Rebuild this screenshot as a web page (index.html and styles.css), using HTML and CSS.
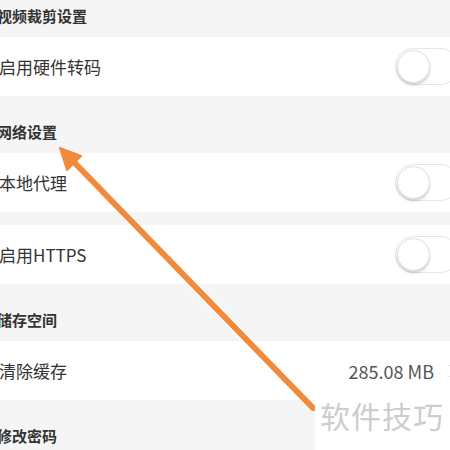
FILE: index.html
```html
<!DOCTYPE html>
<html>
<head>
  <title>设置</title>
  <link rel="stylesheet" href="styles.css">
</head>
<body>
  <div class="settings">
    <div class="group-title">视频裁剪设置</div>
    <div class="row">
      <span class="label">启用硬件转码</span>
      <div class="switch"><div class="knob"></div></div>
    </div>

    <div class="group-title">网络设置</div>
    <div class="row">
      <span class="label">本地代理</span>
      <div class="switch"><div class="knob"></div></div>
    </div>
    <div class="row">
      <span class="label">启用HTTPS</span>
      <div class="switch"><div class="knob"></div></div>
    </div>

    <div class="group-title">储存空间</div>
    <div class="row">
      <span class="label">清除缓存</span>
      <div class="value">
        <span>285.08 MB</span>
        <svg class="chevron" width="12" height="16" viewBox="0 0 12 16">
          <path d="M3 2 L9 8 L3 14" fill="none" stroke="#999" stroke-width="1.6"/>
        </svg>
      </div>
    </div>

    <div class="group-title">修改密码</div>
  </div>

  <!-- 标注箭头 -->
  <svg class="arrow" width="450" height="450" viewBox="0 0 450 450">
    <line x1="313" y1="408" x2="70" y2="158" stroke="#fff" stroke-opacity="0.6" stroke-width="9" stroke-linecap="round"/>
    <line x1="313" y1="408" x2="70" y2="158" stroke="#f28a3b" stroke-width="6" stroke-linecap="round"/>
    <polygon points="60,148 81,156 67,170" fill="#f28a3b" stroke="#f28a3b" stroke-width="2" stroke-linejoin="round"/>
  </svg>

  <div class="watermark">软件技巧</div>
</body>
</html>
```

FILE: styles.css
```css
body {
  margin: 0;
  background-color: #f5f5f5;
  font-family: "Noto Sans CJK SC", "Noto Sans", sans-serif;
  overflow: hidden;
  width: 450px;
  height: 450px;
  position: relative;
}

.settings {
  width: 490px;
  margin-top: -20px;
  margin-left: -3px;
  display: flex;
  flex-direction: column;
}

.group-title {
  height: 57px;
  box-sizing: border-box;
  padding-top: 26px;
  line-height: 20px;
  font-size: 15px;
  font-weight: bold;
  color: #333;
}

.row {
  height: 59px;
  background-color: #fff;
  display: flex;
  align-items: center;
  justify-content: space-between;
  padding-right: 28px;
}

.row + .row {
  margin-top: 13px;
}

.label {
  font-size: 17px;
  color: #333;
  padding-left: 2px;
}

.switch {
  width: 64px;
  height: 37px;
  box-sizing: border-box;
  border: 1px solid #e6e6e6;
  border-radius: 19px;
  background-color: #fff;
  display: flex;
  align-items: center;
  padding-left: 1px;
}

.knob {
  width: 33px;
  height: 33px;
  border-radius: 50%;
  background-color: #fff;
  border: 1px solid #e0e0e0;
  box-sizing: border-box;
  box-shadow: 0 2px 3px rgba(0, 0, 0, 0.18);
}

.value {
  display: flex;
  align-items: center;
  gap: 13px;
  font-size: 18px;
  color: #555;
}

.chevron {
  display: block;
}

.arrow {
  position: absolute;
  left: 0;
  top: 0;
}

.watermark {
  position: absolute;
  left: 315px;
  top: 400px;
  width: 135px;
  height: 50px;
  background-color: #fff;
  padding-left: 5px;
  box-sizing: border-box;
  font-size: 30px;
  line-height: 30px;
  color: #cdcdcd;
  letter-spacing: 1px;
}
```
